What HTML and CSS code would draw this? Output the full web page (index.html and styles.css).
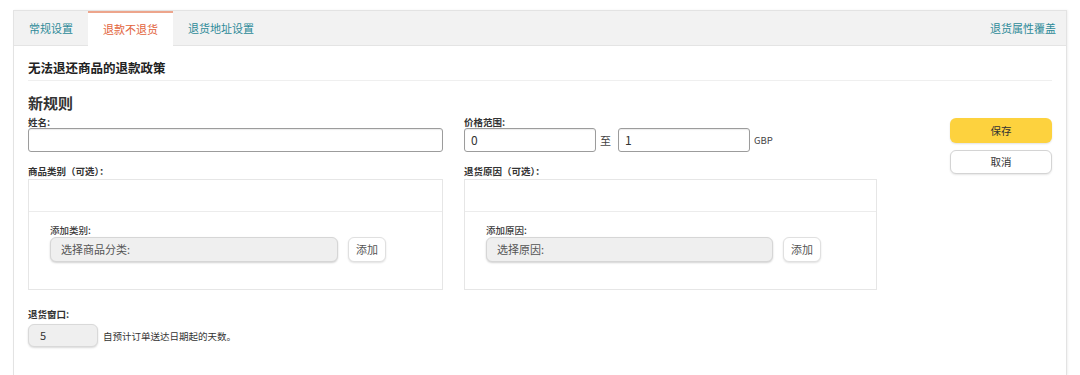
FILE: index.html
```html
<!DOCTYPE html>
<html lang="zh-CN">
<head>
<meta charset="utf-8">
<title>退款不退货</title>
<link rel="stylesheet" href="styles.css">
</head>
<body>
<div class="panel">
  <div class="tabs">
    <div class="tab">常规设置</div>
    <div class="tab active">退款不退货</div>
    <div class="tab">退货地址设置</div>
    <div class="tab-link">退货属性覆盖</div>
  </div>
  <div class="content">
    <div class="section-title">无法退还商品的退款政策</div>
    <div class="rule-title">新规则</div>
    <div class="form-row">
      <div class="col col-left">
        <div class="label">姓名:</div>
        <div class="text-input wide"></div>
        <div class="label label-gap">商品类别（可选）：</div>
        <div class="picker">
          <div class="picker-list"></div>
          <div class="picker-add">
            <div class="label">添加类别:</div>
            <div class="picker-controls">
              <div class="select">选择商品分类:</div>
              <div class="add-btn">添加</div>
            </div>
          </div>
        </div>
      </div>
      <div class="col col-right">
        <div class="label">价格范围:</div>
        <div class="price-row">
          <div class="text-input price">0</div>
          <span class="to">至</span>
          <div class="text-input price">1</div>
          <span class="currency">GBP</span>
        </div>
        <div class="label label-gap">退货原因（可选）：</div>
        <div class="picker">
          <div class="picker-list"></div>
          <div class="picker-add">
            <div class="label">添加原因:</div>
            <div class="picker-controls">
              <div class="select">选择原因:</div>
              <div class="add-btn">添加</div>
            </div>
          </div>
        </div>
      </div>
      <div class="actions">
        <div class="btn btn-save">保存</div>
        <div class="btn btn-cancel">取消</div>
      </div>
    </div>
    <div class="window">
      <div class="label">退货窗口:</div>
      <div class="window-row">
        <div class="days-input">5</div>
        <span class="hint">自预计订单送达日期起的天数。</span>
      </div>
    </div>
  </div>
</div>
</body>
</html>
```

FILE: styles.css
```css
* { box-sizing: border-box; }
html, body { margin: 0; padding: 0; background: #fff; overflow: hidden; }
body {
  font-family: "Noto Sans CJK SC", "Noto Sans", "Liberation Sans", sans-serif;
  color: #333;
}
.panel {
  margin: 10px 13px 0 13px;
  height: 365px;
  border: 1px solid #e3e3e3;
  border-bottom: none;
  box-shadow: 1px 0 2px rgba(0,0,0,0.06);
}
.tabs {
  display: flex;
  align-items: stretch;
  height: 35px;
  background: #f2f2f2;
  border-bottom: 1px solid #e4e4e4;
}
.tab {
  padding: 0 15px;
  font-size: 11px;
  line-height: 34px;
  color: #2d8a98;
}
.tab.active {
  background: #fff;
  color: #e2633b;
  border-top: 2px solid #eda58c;
  line-height: 32px;
  margin-bottom: -1px;
}
.tab-link {
  margin-left: auto;
  padding-right: 10px;
  font-size: 11px;
  line-height: 34px;
  color: #2d8a98;
}
.content { padding: 0 14px; }
.section-title {
  padding: 13px 0 4px;
  line-height: 17px;
  font-size: 12.5px;
  font-weight: 700;
  color: #222;
  border-bottom: 1px solid #efefef;
}
.rule-title {
  margin-top: 13px;
  font-size: 15px;
  line-height: 18px;
  font-weight: 700;
  color: #333;
}
.form-row {
  display: flex;
  align-items: flex-start;
  margin-top: 4px;
}
.col-left { width: 415px; }
.col-right { width: 413px; margin-left: 21px; }
.label {
  font-size: 9.5px;
  line-height: 12px;
  font-weight: 700;
  color: #333;
}
.label-gap { margin-top: 13px; line-height: 13px; }
.text-input {
  height: 24px;
  border: 1px solid #9c9c9c;
  border-radius: 3px;
  box-shadow: inset 0 1px 1px rgba(0,0,0,0.08);
  font-size: 12px;
  line-height: 22px;
  padding-left: 6px;
  color: #333;
  background: #fff;
}
.text-input.wide { width: 100%; }
.price-row { display: flex; align-items: center; }
.text-input.price { width: 132px; }
.to { font-size: 11px; margin: 0 7px 0 4px; color: #444; }
.currency { font-size: 9.5px; margin-left: 4px; color: #444; }
.picker {
  margin-top: 1px;
  border: 1px solid #e6e6e6;
  height: 111px;
}
.picker-list {
  height: 32px;
  border-bottom: 1px solid #ececec;
}
.picker-add { padding: 12px 21px 0; }
.picker-add .label { line-height: 13px; font-weight: 500; color: #3a3a3a; }
.picker-controls { display: flex; align-items: center; }
.select {
  width: 288px;
  height: 25px;
  background: #efefef;
  border: 1px solid #d6d6d6;
  border-radius: 6px;
  box-shadow: 0 1px 2px rgba(0,0,0,0.18);
  font-size: 11px;
  line-height: 23px;
  padding-left: 10px;
  color: #555;
}
.col-right .select { width: 287px; }
.add-btn {
  margin-left: 10px;
  width: 38px;
  height: 25px;
  background: #fff;
  border: 1px solid #e0e0e0;
  border-radius: 6px;
  box-shadow: 0 1px 2px rgba(0,0,0,0.12);
  font-size: 11px;
  line-height: 23px;
  text-align: center;
  color: #555;
}
.actions {
  margin-left: auto;
  width: 102px;
  margin-top: 2px;
  display: flex;
  flex-direction: column;
  gap: 7px;
}
.btn {
  border-radius: 6px;
  font-size: 10.5px;
  text-align: center;
  color: #333;
}
.btn-save {
  height: 25px;
  line-height: 25px;
  background: #fdd23e;
  box-shadow: 0 1px 2px rgba(0,0,0,0.12);
}
.btn-cancel {
  height: 24px;
  line-height: 22px;
  background: #fff;
  border: 1px solid #d4d4d4;
  box-shadow: 0 1px 2px rgba(0,0,0,0.1);
}
.window { margin-top: 18px; }
.window .label { line-height: 13px; margin-bottom: 3px; }
.window-row { display: flex; align-items: center; }
.days-input {
  width: 70px;
  height: 23px;
  background: #efefef;
  border: 1px solid #d9d9d9;
  border-radius: 6px;
  box-shadow: 0 1px 2px rgba(0,0,0,0.15);
  font-size: 11px;
  line-height: 21px;
  padding-left: 11px;
  color: #333;
}
.hint {
  margin-left: 5px;
  font-size: 9.5px;
  color: #333;
}
```
